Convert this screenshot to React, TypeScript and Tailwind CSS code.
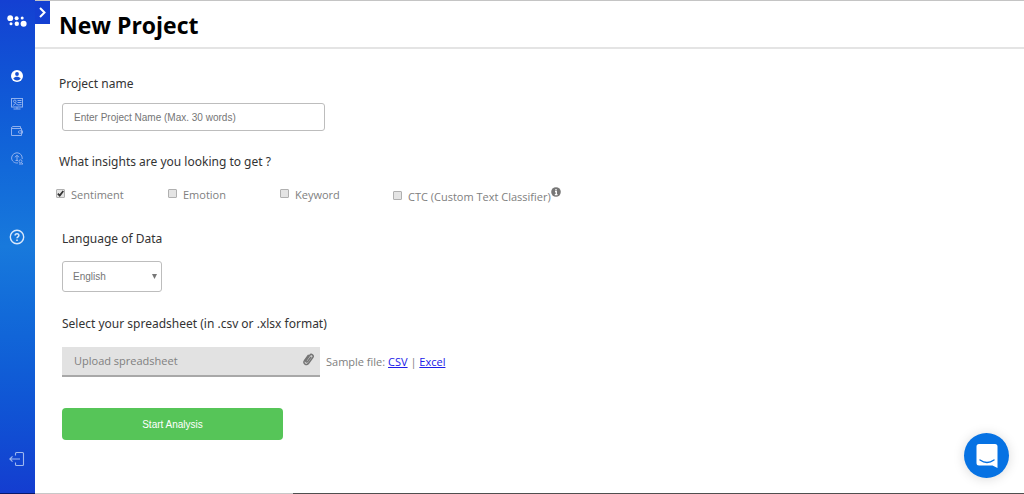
import React from "react";

const label = "text-[12px] leading-5 text-[#333333]";
const muted = "font-['Open_Sans','Noto_Sans',sans-serif] text-[11px] leading-5 text-[#808080]";

function Logo() {
  return (
    <svg width="20" height="12" viewBox="0 0 20 12" fill="white" aria-hidden="true">
      <circle cx="3.2" cy="3.2" r="2.900" />
      <circle cx="9.6" cy="3.2" r="2" />
      <circle cx="15.2" cy="3" r="1.500" />
      <circle cx="4" cy="8.800" r="1.500" />
      <circle cx="9.800" cy="8.800" r="2.200" />
      <circle cx="16.600" cy="8.700" r="3" />
    </svg>
  );
}

function UserIcon() {
  return (
    <svg width="12" height="12" viewBox="0 0 12 12" aria-hidden="true">
      <circle cx="6" cy="6" r="6" fill="white" />
      <circle cx="6" cy="4" r="1.9" fill="#1550d4" />
      <path d="M2.3 8.6C3 7.3 4.7 6.8 6 6.8s3 .5 3.7 1.8C8.900 9.900 7.500 10.600 6 10.600S3.100 9.900 2.300 8.600Z" fill="#1550d4" />
    </svg>
  );
}

function MonitorIcon() {
  return (
    <svg width="12" height="13" viewBox="0 0 12 13" fill="none" stroke="#8fb0ee" strokeWidth="1" aria-hidden="true">
      <rect x="0.500" y="1.500" width="11" height="8.500" />
      <circle cx="3.800" cy="4.300" r="1.300" />
      <path d="M6.500 3.500H10.500M6.500 5.500H10.500M2 8.500L4.500 6.500L7 8L10.500 7.500M2.500 12H9.500M6 10V12" />
    </svg>
  );
}

function WalletIcon() {
  return (
    <svg width="12" height="12" viewBox="0 0 12 12" fill="none" stroke="#8fb0ee" strokeWidth="1" aria-hidden="true">
      <path d="M.5 2.500V10.500H10.500V3.500H1C.3 2.500 1 1.500 2 1.500H9.500V3.500" />
      <path d="M11.500 5.800H8.500C7 5.800 7 8.200 8.500 8.200H11.500Z" />
    </svg>
  );
}

function InsightIcon() {
  return (
    <svg width="12" height="13" viewBox="0 0 12 13" fill="none" stroke="#8fb0ee" strokeWidth="1" aria-hidden="true">
      <path d="M7 10.900C3.500 11.500.6 9 .6 6C.6 3.200 3 .8 6 .8S11.200 3.200 11.200 6V7" />
      <path d="M6 8.500V3.500M3.800 5.300L6 3.300L8.200 5.300M4.500 8.500H7" />
      <circle cx="9.500" cy="9.300" r="1.500" />
      <path d="M10.500 10.500L12 12M8 12H12" />
    </svg>
  );
}

function HelpIcon() {
  return (
    <svg width="16" height="16" viewBox="0 0 16 16" fill="none" stroke="#d9e8fb" aria-hidden="true">
      <circle cx="8" cy="8" r="6.700" strokeWidth="1.400" />
      <path d="M6.100 6.500C6.100 4.100 9.900 4.100 9.900 6.500C9.900 7.800 8 7.800 8 9.300" strokeWidth="1.500" />
      <circle cx="8" cy="11.200" r=".5" fill="#d9e8fb" />
    </svg>
  );
}

function LogoutIcon() {
  return (
    <svg width="16" height="16" viewBox="0 0 16 16" fill="none" stroke="#9fb8ee" strokeWidth="1.100" aria-hidden="true">
      <path d="M6.500 4.500V2.500Q6.500 1.500 7.500 1.500H13.500Q14.500 1.500 14.500 2.500V13.500Q14.500 14.500 13.500 14.500H7.500Q6.500 14.500 6.500 13.500V11.500" />
      <path d="M11 8H1M3.500 5.300L.8 8L3.500 10.700" />
    </svg>
  );
}

function Check({ text, checked = false, children }: { text: string; checked?: boolean; children?: React.ReactNode }) {
  return (
    <label className={`flex items-start ${muted}`}>
      <input
        type="checkbox"
        defaultChecked={checked}
        className="peer mt-1 h-[9px] w-[9px] shrink-0 appearance-none rounded-[1px] border border-[#b0b0b0] bg-[#e4e4e4]"
      />
      <svg className="invisible -ml-[9px] mt-1 h-[9px] w-[9px] shrink-0 peer-checked:visible" viewBox="0 0 9 9" fill="none" stroke="#333333" strokeWidth="1.700" aria-hidden="true">
        <path d="M1.800 4.600L3.700 6.600L7.300 1.900" />
      </svg>
      <span className="ml-1.5 whitespace-nowrap">{text}</span>
      {children}
    </label>
  );
}

export default function App() {
  return (
    <div className="flex min-h-screen bg-white font-['Noto_Sans','Open_Sans',sans-serif]">
      <aside className="relative flex w-[35px] shrink-0 flex-col items-center border-b border-[#07186b] bg-linear-to-b from-[#1440d2] via-[#1879dc] to-[#143dd0] pt-[15px] pr-px pb-[26px]">
        <a href="#home" aria-label="Home"><Logo /></a>
        <nav className="mt-[43px] flex flex-col items-center gap-[15px]">
          <a href="#account" aria-label="Account"><UserIcon /></a>
          <a href="#projects" aria-label="Projects"><MonitorIcon /></a>
          <a href="#billing" aria-label="Billing"><WalletIcon /></a>
          <a href="#insights" aria-label="Insights"><InsightIcon /></a>
        </nav>
        <a href="#help" aria-label="Help" className="mt-[64px]"><HelpIcon /></a>
        <a href="#logout" aria-label="Log out" className="mt-auto"><LogoutIcon /></a>
        <button type="button" aria-label="Expand menu" className="absolute top-px left-full flex h-[23px] w-[15px] items-center justify-center bg-[#1440d2]">
          <svg width="8" height="11" viewBox="0 0 8 11" fill="none" stroke="white" strokeWidth="2" aria-hidden="true">
            <path d="M1 1L5.500 5.500L1 10" />
          </svg>
        </button>
      </aside>

      <main className="flex min-w-0 grow flex-col border-t border-[#c4c4c4]">
        <header className="flex h-12 items-center border-b-2 border-[#e4e4e4] pt-0.5 pl-6">
          <h1 className="font-['Open_Sans','Noto_Sans',sans-serif] text-[23px] font-bold text-black">New Project</h1>
        </header>

        <form className="flex grow flex-col items-start pl-6" onSubmit={(e) => e.preventDefault()}>
          <label htmlFor="name" className={`mt-[25px] ${label}`}>Project name</label>
          <input
            id="name"
            type="text"
            placeholder="Enter Project Name (Max. 30 words)"
            className="mt-[9px] ml-[3px] h-7 w-[263px] rounded-[3px] border border-[#bdbdbd] px-[11px] font-['Liberation_Sans',sans-serif] text-[10px] text-[#555555] placeholder:text-[#757575]"
          />

          <fieldset className="mt-[21px]">
            <legend className={label}>What insights are you looking to get ?</legend>
            <div className="-ml-[3px] mt-[13px] grid grid-cols-[repeat(3,112px)_auto] items-start">
              <Check text="Sentiment" checked />
              <Check text="Emotion" />
              <Check text="Keyword" />
              <div className="pt-0.5 pl-px">
                <Check text="CTC (Custom Text Classifier)">
                  <svg width="10" height="10" viewBox="0 0 10 10" aria-hidden="true">
                    <circle cx="5" cy="5" r="4.800" fill="#777777" />
                    <path d="M5 2V3.300M4 4.500H5.300V7.500M3.800 7.600H6.500" stroke="white" strokeWidth="1.300" fill="none" />
                  </svg>
                </Check>
              </div>
            </div>
          </fieldset>

          <label htmlFor="language" className={`mt-[22px] ml-[3px] ${label}`}>Language of Data</label>
          <div className="mt-3 ml-[3px] grid items-center">
            <select id="language" className="col-start-1 row-start-1 h-[31px] w-[100px] appearance-none rounded-[3px] border border-[#bdbdbd] bg-white px-[10px] font-['Liberation_Sans',sans-serif] text-[10px] text-[#757575]">
              <option>English</option>
            </select>
            <svg className="pointer-events-none col-start-1 row-start-1 mr-[5px] justify-self-end" width="5" height="5" viewBox="0 0 5 5" aria-hidden="true">
              <path d="M0 0H5L2.500 5Z" fill="#777777" />
            </svg>
          </div>

          <span className={`mt-[22px] ml-[3px] ${label}`}>Select your spreadsheet (in .csv or .xlsx format)</span>
          <div className={`mt-[13px] ml-[3px] flex items-center gap-1.5 ${muted}`}>
            <button type="button" className="flex h-[30px] w-[258px] items-center justify-between border-b-2 border-[#a8a8a8] bg-[#e2e2e2] pr-1.5 pl-3">
              Upload spreadsheet
              <svg className="mb-1" width="11" height="13" viewBox="0 0 11 13" fill="none" stroke="#757575" strokeWidth="1.500" strokeLinecap="round" aria-hidden="true">
                <path d="M7.800 4.200L4.600 8.600C3.800 9.700 2.300 8.600 3.100 7.500L6.700 2.400C8.300.2 11.300 2.300 9.700 4.600L5.600 10.300C3.500 13.200-.5 10.300 1.600 7.400L5.200 2.400" />
              </svg>
            </button>
            <span className="whitespace-nowrap">
              Sample file: <a href="#csv" className="text-[#2020e8] underline">CSV</a> | <a href="#excel" className="text-[#2020e8] underline">Excel</a>
            </span>
          </div>

          <button type="submit" className="mt-[31px] ml-[3px] h-8 w-[221px] rounded-[4px] bg-[#56c558] font-['Liberation_Sans',sans-serif] text-[10px] text-white">
            Start Analysis
          </button>
        </form>
        <div className="flex h-px shrink-0 bg-[#4f4f4f]">
          <div className="w-[258px] bg-[#c8c8c8]" />
        </div>
      </main>

      <button type="button" aria-label="Open chat" className="fixed right-[15px] bottom-4 flex h-[45px] w-[45px] items-center justify-center rounded-full bg-[#0672e3] shadow-[0_1px_12px_rgba(0,0,0,0.15)]">
        <svg width="22" height="24" viewBox="0 0 22 24" aria-hidden="true">
          <path d="M3 0H19Q21.500 0 21.500 2.500V24L16.500 21.500H3Q.5 21.500.5 19V2.500Q.5 0 3 0Z" fill="white" />
          <path d="M4 16Q11 21 18 16" fill="none" stroke="#0672e3" strokeWidth="1.400" strokeLinecap="round" />
        </svg>
      </button>
    </div>
  );
}
